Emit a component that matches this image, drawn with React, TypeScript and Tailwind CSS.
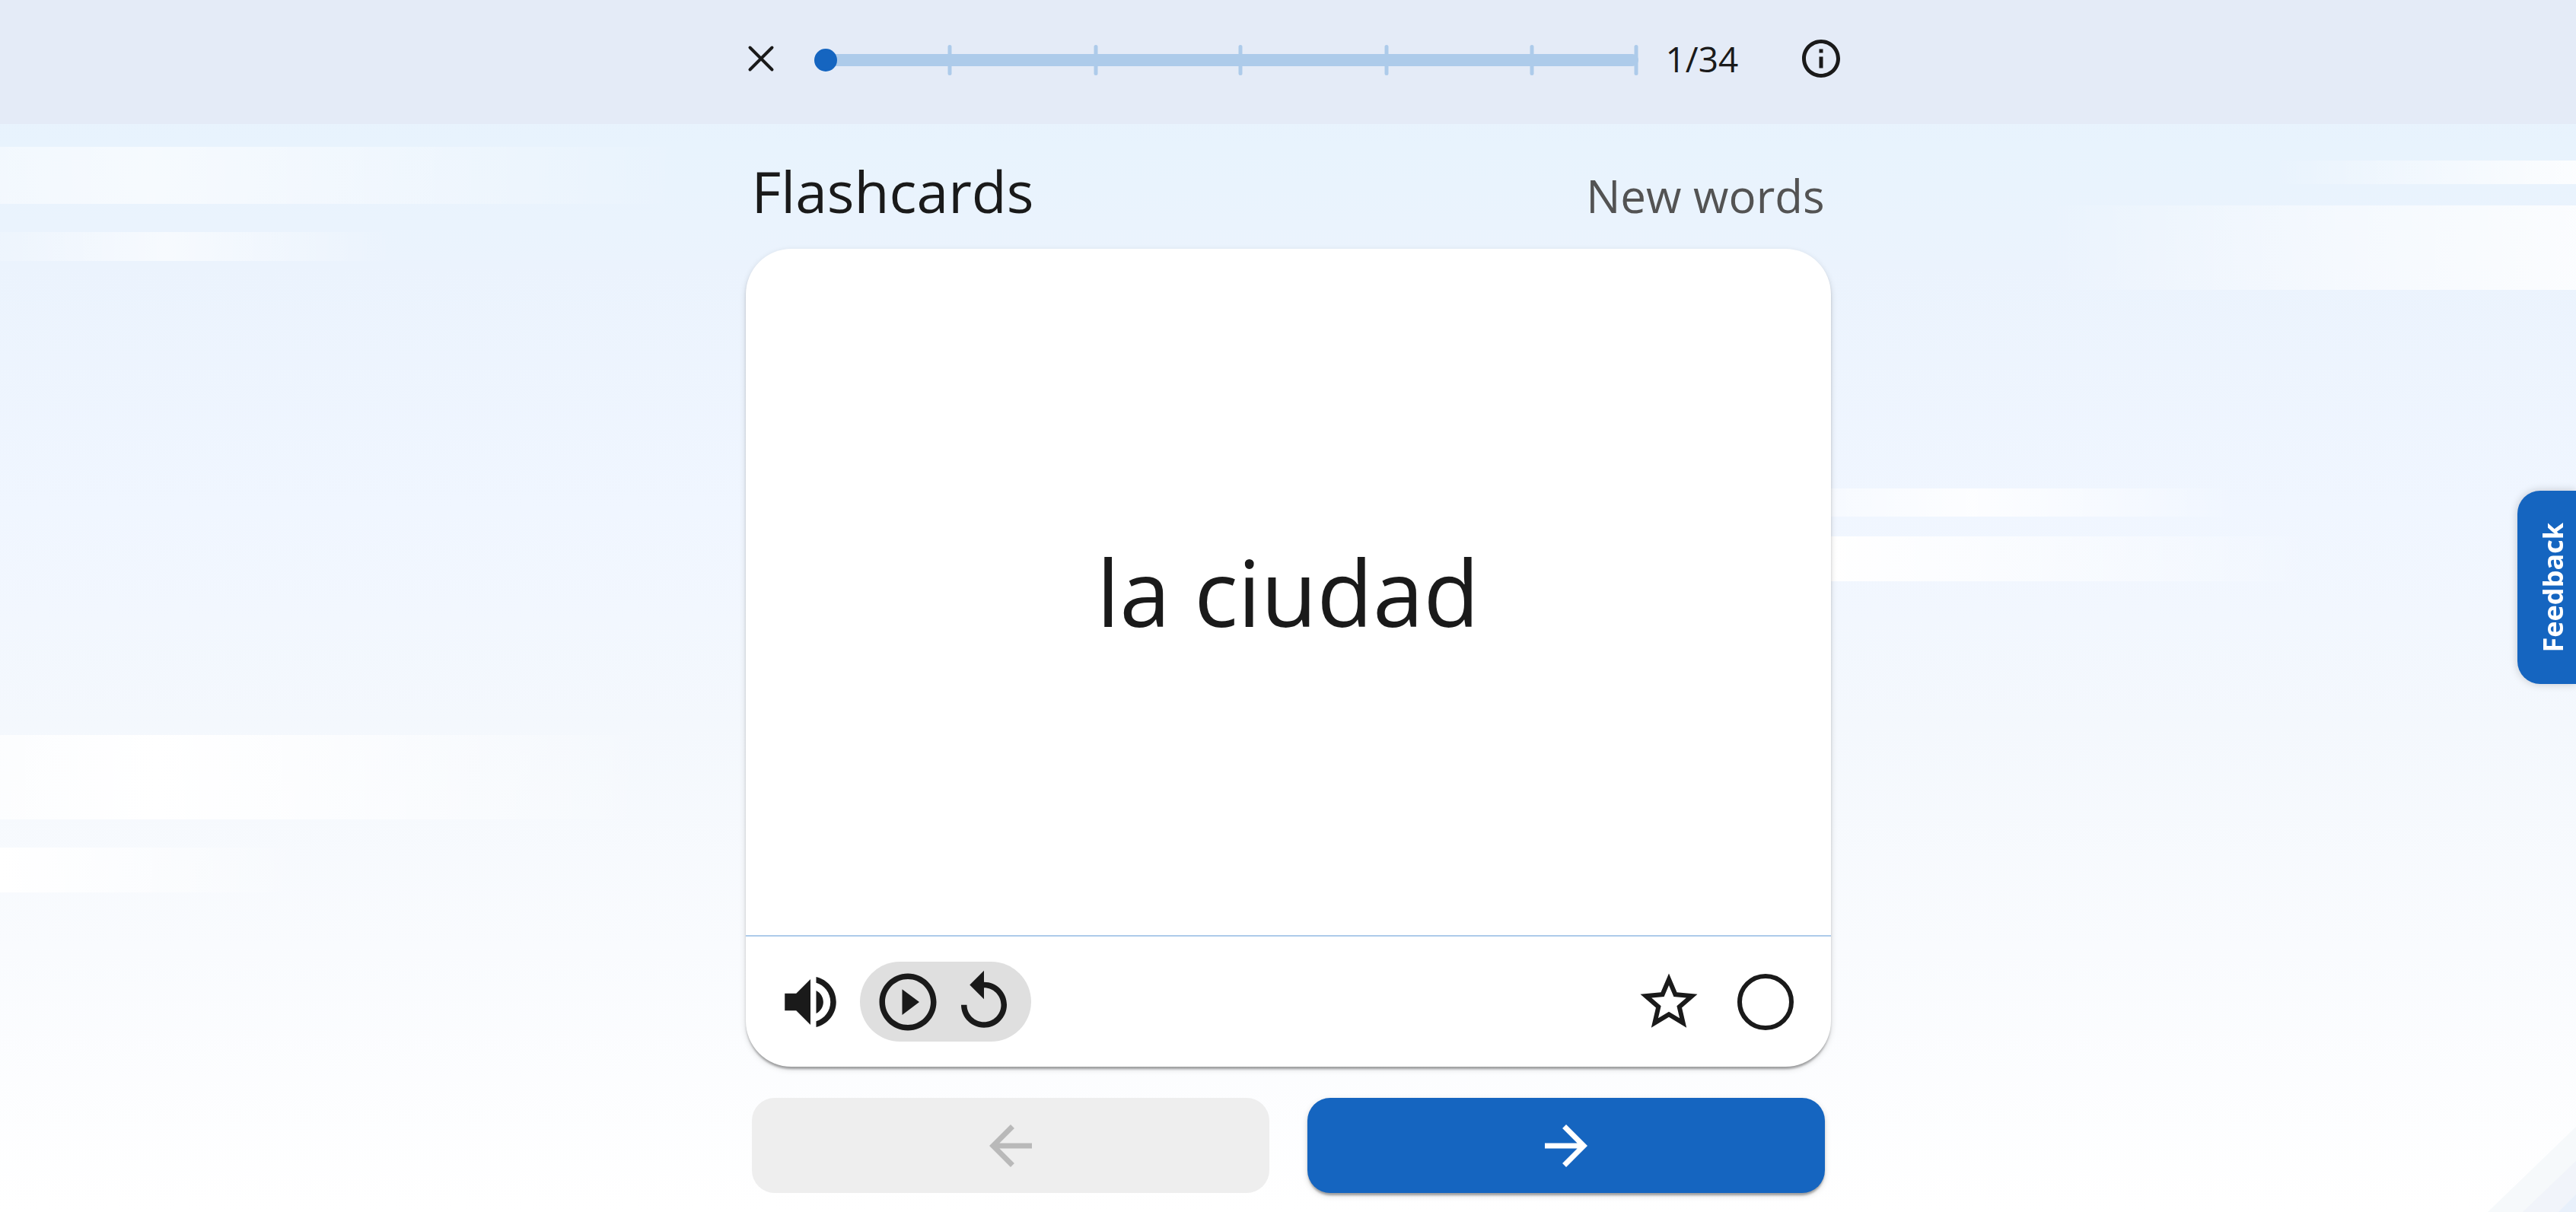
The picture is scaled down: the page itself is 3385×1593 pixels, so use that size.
import React, { useState } from "react";

const WORDS = ["la ciudad"];
const TOTAL = 34;
const CHECKPOINTS = [16.5, 34.2, 51.8, 69.5, 87.1, 99.8];

type IconProps = { className?: string; children: React.ReactNode };

function Icon({ className = "", children }: IconProps) {
  return (
    <svg viewBox="0 0 24 24" fill="currentColor" aria-hidden="true" className={`shrink-0 ${className}`}>
      {children}
    </svg>
  );
}

function Streaks() {
  return (
    <div aria-hidden="true" className="pointer-events-none absolute inset-0 overflow-hidden">
      <div className="absolute left-0 top-[193px] h-[75px] w-[900px] bg-[linear-gradient(90deg,rgba(255,255,255,0.45),rgba(255,255,255,0.6)_22%,rgba(255,255,255,0.4)_50%,rgba(255,255,255,0)_100%)]" />
      <div className="absolute left-0 top-[305px] h-[38px] w-[520px] bg-[linear-gradient(90deg,rgba(255,255,255,0.15),rgba(255,255,255,0.6)_42%,rgba(255,255,255,0))]" />
      <div className="absolute right-0 top-[211px] h-[31px] w-[400px] bg-[linear-gradient(270deg,rgba(255,255,255,0.85),rgba(255,255,255,0))]" />
      <div className="absolute right-0 top-[270px] h-[111px] w-[700px] bg-[linear-gradient(270deg,rgba(255,255,255,0.8),rgba(255,255,255,0.5)_45%,rgba(255,255,255,0))]" />
      <div className="absolute left-[71%] top-[642px] h-[37px] w-[540px] bg-[linear-gradient(90deg,rgba(255,255,255,0.45),rgba(255,255,255,0.85)_35%,rgba(255,255,255,0))]" />
      <div className="absolute left-[71%] top-[705px] h-[59px] w-[640px] bg-[linear-gradient(90deg,rgba(255,255,255,1),rgba(255,255,255,0))]" />
      <div className="absolute left-0 top-[966px] h-[111px] w-[860px] bg-[linear-gradient(90deg,rgba(255,255,255,0.7),rgba(255,255,255,1)_24%,rgba(255,255,255,0))]" />
      <div className="absolute left-0 top-[1114px] h-[59px] w-[400px] bg-[linear-gradient(90deg,rgba(255,255,255,1),rgba(255,255,255,0))]" />
      <svg viewBox="0 0 116 112" className="absolute bottom-0 right-0 h-[112px] w-[116px]">
        <path d="M116 0V112H0Z" fill="#f6f9fb" />
        <path d="M116 45V112H46Z" fill="#f1f4fa" />
        <path d="M116 89V112H93Z" fill="#e8f0fb" />
      </svg>
    </div>
  );
}

function Header({ current }: { current: number }) {
  return (
    <header className="relative bg-[#e4ebf7]">
      <div className="mx-auto flex h-[163px] max-w-[1466px] items-center pb-[10px]">
        <button type="button" aria-label="Close" className="flex h-20 w-20 items-center justify-center">
          <svg viewBox="0 0 36 36" className="h-9 w-9" fill="none" stroke="currentColor" strokeWidth="4" strokeLinecap="round" aria-hidden="true">
            <path d="M3.500 3.500L32.500 32.500M32.500 3.500L3.500 32.500" />
          </svg>
        </button>
        <div
          role="progressbar"
          aria-label="Progress"
          aria-valuemin={1}
          aria-valuemax={TOTAL}
          aria-valuenow={current}
          className="relative ml-[30px] mt-[5px] flex h-10 flex-1 items-center"
        >
          <div className="ml-[15px] h-4 flex-1 rounded-full bg-[#adcbea]" />
          {CHECKPOINTS.map((p) => (
            <span key={p} className="absolute top-0 h-10 w-[5px] -translate-x-1/2 rounded-full bg-[#adcbea]" style={{ left: `${p}%` }} />
          ))}
          <span className="absolute left-0 h-[30px] w-[30px] rounded-full bg-[#1565c0]" />
        </div>
        <p className="ml-9 w-[171px] text-[46px] leading-[60px]">
          {current}/{TOTAL}
        </p>
        <button type="button" aria-label="Information" className="flex h-20 w-[66px] items-center justify-center">
          <Icon className="h-[60px] w-[60px]">
            <path d="M11 7h2v2h-2zm0 4h2v6h-2zm1-9C6.480 2 2 6.480 2 12s4.480 10 10 10 10-4.480 10-10S17.520 2 12 2zm0 18c-4.410 0-8-3.590-8-8s3.590-8 8-8 8 3.590 8 8-3.590 8-8 8z" />
          </Icon>
        </button>
      </div>
    </header>
  );
}

function Card({ word }: { word: string }) {
  const [known, setKnown] = useState(false);
  return (
    <section className="flex flex-1 flex-col rounded-[60px] bg-white shadow-[0_5px_3px_-2px_rgba(0,0,0,0.2),0_3px_3px_rgba(0,0,0,0.14),0_3px_8px_rgba(0,0,0,0.14)]">
      <div className="flex flex-1 items-center justify-center">
        <p className="text-[120px] leading-[164px]">{word}</p>
      </div>
      <div className="flex h-[173px] items-center border-t-2 border-[#adcbea] pl-10 pr-[49px]">
        <button type="button" aria-label="Listen">
          <Icon className="h-[90px] w-[90px]">
            <path d="M3 9v6h4l5 5V4L7 9H3zm13.500 3c0-1.770-1.020-3.290-2.500-4.030v8.050c1.480-.73 2.500-2.250 2.500-4.020zM14 3.230v2.060c2.890.86 5 3.540 5 6.710s-2.110 5.850-5 6.710v2.060c4.010-.91 7-4.490 7-8.770s-2.990-7.860-7-8.770z" />
          </Icon>
        </button>
        <div className="ml-5 flex h-[105px] items-center gap-[10px] rounded-full bg-[#dfdfdf] pl-[18px] pr-[17px]">
          <button type="button" aria-label="Play">
            <Icon className="h-[90px] w-[90px]">
              <path d="M10 16.500l6-4.500-6-4.500v9zM12 2C6.480 2 2 6.480 2 12s4.480 10 10 10 10-4.480 10-10S17.520 2 12 2zm0 18c-4.410 0-8-3.590-8-8s3.590-8 8-8 8 3.590 8 8-3.590 8-8 8z" />
            </Icon>
          </button>
          <button type="button" aria-label="Replay">
            <Icon className="h-[90px] w-[90px]">
              <path d="M12 5V1L7 6l5 5V7c3.310 0 6 2.690 6 6s-2.690 6-6 6-6-2.690-6-6H4c0 4.420 3.580 8 8 8s8-3.580 8-8-3.580-8-8-8z" />
            </Icon>
          </button>
        </div>
        <button type="button" aria-label="Favourite" className="ml-auto">
          <Icon className="h-[90px] w-[90px]">
            <path d="M22 9.240l-7.190-.62L12 2 9.190 8.630 2 9.240l5.460 4.730L5.820 21 12 17.270 18.180 21l-1.630-7.030L22 9.240zM12 15.400l-3.760 2.270 1-4.280-3.320-2.880 4.380-.38L12 6.100l1.710 4.040 4.380.38-3.320 2.880 1 4.280L12 15.400z" />
          </Icon>
        </button>
        <input
          type="checkbox"
          aria-label="Mark as known"
          checked={known}
          onChange={(e) => setKnown(e.target.checked)}
          className="ml-[45px] h-[74px] w-[74px] appearance-none rounded-full border-[6px] border-[#1a1a1a] checked:bg-[#1a1a1a]"
        />
      </div>
    </section>
  );
}

export default function App() {
  return (
    <div className="relative flex min-h-screen flex-col bg-[linear-gradient(180deg,#e6f2fd_0%,#e8f3fd_12%,#ebf3fd_22%,#f0f6ff_42%,#f4f8fd_60%,#f9fbfe_78%,#ffffff_100%)] font-['Open_Sans',sans-serif] text-[#1a1a1a]">
      <Streaks />
      <Header current={1} />
      <main className="relative mx-auto flex w-full max-w-[1426px] flex-1 flex-col pb-[25px]">
        <div className="flex items-baseline justify-between px-2 pb-[25px] pt-[37px]">
          <h1 className="text-[75px] leading-[102px]">Flashcards</h1>
          <p className="text-[60px] leading-[82px] text-[#535353]">New words</p>
        </div>
        <Card word={WORDS[0]} />
        <div className="mt-[41px] grid grid-cols-2 gap-[50px] px-2">
          <button type="button" disabled aria-label="Previous" className="flex h-[125px] items-center justify-center rounded-[30px] bg-[#eeeeee] text-[#b9b9b9]">
            <Icon className="h-[84px] w-[84px]">
              <path d="M20 11H7.830l5.590-5.590L12 4l-8 8 8 8 1.410-1.410L7.830 13H20v-2z" />
            </Icon>
          </button>
          <button type="button" aria-label="Next" className="flex h-[125px] items-center justify-center rounded-[30px] bg-[#1565c0] text-white shadow-[0_5px_3px_-2px_rgba(0,0,0,0.2),0_3px_3px_rgba(0,0,0,0.14),0_3px_8px_rgba(0,0,0,0.14)]">
            <Icon className="h-[84px] w-[84px]">
              <path d="M12 4l-1.410 1.410L16.170 11H4v2h12.170l-5.580 5.590L12 20l8-8z" />
            </Icon>
          </button>
        </div>
      </main>
      <button
        type="button"
        className="fixed right-0 top-[645px] flex h-[254px] w-[77px] items-center justify-center rounded-l-[30px] bg-[#1565c0] pl-4 text-[36px] font-bold leading-[50px] text-white shadow-[0_0_12px_rgba(0,0,0,0.2)]"
      >
        <span className="rotate-180 [writing-mode:vertical-rl]">Feedback</span>
      </button>
    </div>
  );
}
